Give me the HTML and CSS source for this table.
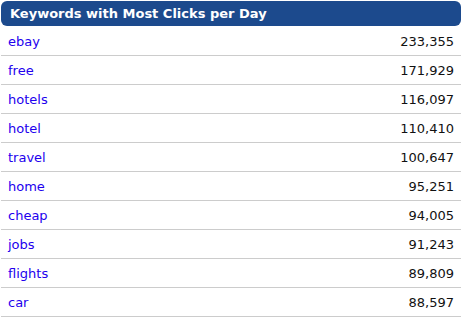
FILE: index.html
```html
<!DOCTYPE html>
<html>
<head>
<meta charset="utf-8">
<link rel="stylesheet" href="styles.css">
</head>
<body>
<div class="panel">
  <div class="header">Keywords with Most Clicks per Day</div>
  <ul class="list">
    <li class="row"><a class="kw" href="#">ebay</a><span class="num">233,355</span></li>
    <li class="row"><a class="kw" href="#">free</a><span class="num">171,929</span></li>
    <li class="row"><a class="kw" href="#">hotels</a><span class="num">116,097</span></li>
    <li class="row"><a class="kw" href="#">hotel</a><span class="num">110,410</span></li>
    <li class="row"><a class="kw" href="#">travel</a><span class="num">100,647</span></li>
    <li class="row"><a class="kw" href="#">home</a><span class="num">95,251</span></li>
    <li class="row"><a class="kw" href="#">cheap</a><span class="num">94,005</span></li>
    <li class="row"><a class="kw" href="#">jobs</a><span class="num">91,243</span></li>
    <li class="row"><a class="kw" href="#">flights</a><span class="num">89,809</span></li>
    <li class="row"><a class="kw" href="#">car</a><span class="num">88,597</span></li>
  </ul>
</div>
</body>
</html>
```
FILE: styles.css
```css
html, body {
  margin: 0;
  padding: 0;
  background: #fff;
}
body {
  padding: 1px;
  font-family: "DejaVu Sans", Verdana, sans-serif;
  font-size: 13px;
}
.panel {
  width: 460px;
}
.header {
  height: 25px;
  line-height: 25px;
  background: #1c4a8d;
  color: #fff;
  font-weight: bold;
  font-size: 13px;
  padding-left: 9px;
  border-radius: 6px;
  margin-bottom: 1px;
}
.list {
  list-style: none;
  margin: 0;
  padding: 0;
}
.row {
  display: flex;
  justify-content: space-between;
  align-items: center;
  height: 28px;
  border-bottom: 1px solid #cccccc;
  padding: 0 7px 0 7px;
}
.kw {
  color: #2200ee;
  text-decoration: none;
}
.num {
  color: #111;
}
```
